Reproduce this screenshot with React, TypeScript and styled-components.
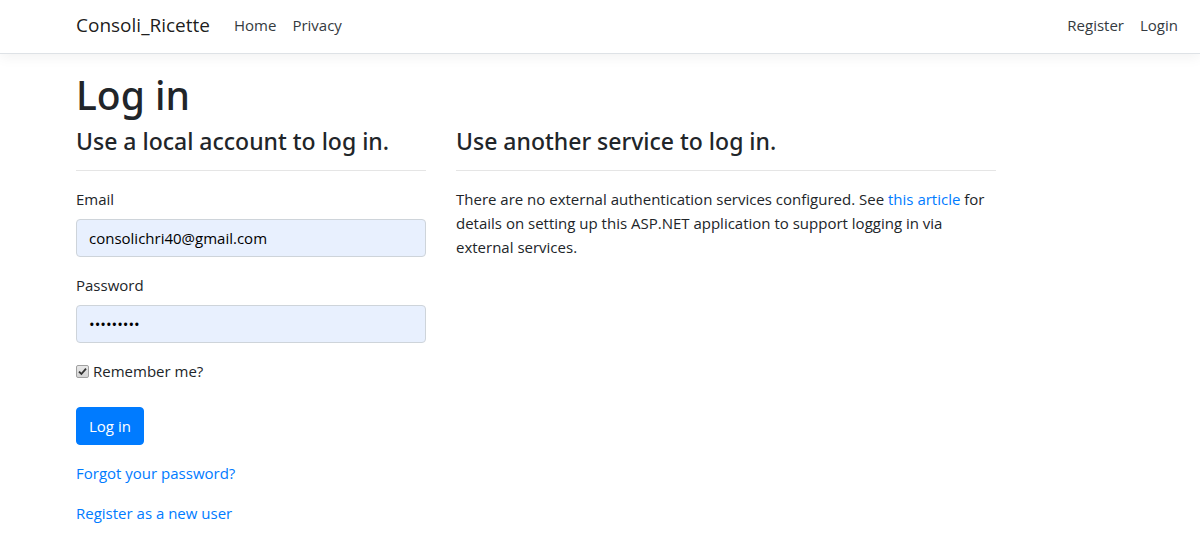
import React from "react";
import styled, { createGlobalStyle } from "styled-components";

const FONT = `"Segoe UI", "Open Sans", "Noto Sans", sans-serif`;
const HEAD = `"Segoe UI", "Noto Sans", "Open Sans", sans-serif`;

const GlobalStyle = createGlobalStyle`
  html, body { margin: 0; padding: 0; background: #fff; }
  body {
    font-family: ${FONT};
    font-size: 15px;
    line-height: 24px;
    color: #212529;
  }
  * { box-sizing: border-box; }
`;

const Navbar = styled.nav`
  background: #fff;
  border-bottom: 1px solid #dee2e6;
  box-shadow: 0 4px 12px rgba(0, 0, 0, 0.05);
  padding: 6px 0 7px;
  margin-bottom: 16px;
`;

const Container = styled.div`
  padding-left: 76px;
  width: 1186px;
  display: flex;
  align-items: center;
`;

const Brand = styled.a`
  font-size: 19px;
  line-height: 30px;
  padding: 4px 0 6px;
  margin-right: 16px;
  color: rgba(0, 0, 0, 0.9);
  text-decoration: none;
`;

const NavList = styled.div<{ $end?: boolean }>`
  display: flex;
  margin-left: ${(p) => (p.$end ? "auto" : "0")};
`;

const NavLink = styled.a`
  padding: 7px 8px 9px;
  line-height: 24px;
  color: #343a40;
  text-decoration: none;
`;

const Main = styled.main`
  padding-left: 76px;
  width: 1186px;
`;

const Title = styled.h1`
  font-family: ${HEAD};
  font-size: 39px;
  font-weight: 500;
  line-height: 47px;
  padding-top: 1px;
  margin: 0 0 9px;
`;

const Row = styled.div`
  display: flex;
  gap: 30px;
`;

const Col = styled.section<{ $w: number }>`
  width: ${(p) => p.$w}px;
`;

const Subtitle = styled.h4`
  font-family: ${HEAD};
  font-size: 23px;
  font-weight: 500;
  line-height: 25px;
  padding-top: 2px;
  margin: 0 0 8px;
`;

const Rule = styled.hr`
  margin: 16px 0;
  border: 0;
  border-top: 1px solid rgba(0, 0, 0, 0.1);
`;

const Group = styled.div`
  margin-bottom: 16px;
`;

const Label = styled.label`
  display: inline-block;
  margin-bottom: 8px;
`;

const Input = styled.input`
  display: block;
  width: 100%;
  height: 38px;
  padding: 6px 12px;
  font-family: ${FONT};
  font-size: 15px;
  line-height: 24px;
  color: #000;
  background: #e8f0fe;
  border: 1px solid #ced4da;
  border-radius: 4px;
  outline: none;
`;

const CheckLabel = styled.label`
  display: flex;
  align-items: center;
  height: 32px;
  padding-bottom: 8px;
  line-height: 24px;
`;

const CheckBox = styled.span`
  width: 13px;
  height: 13px;
  margin: 0 4px 0 0;
  border: 1px solid #a0a0a0;
  border-radius: 2px;
  background: linear-gradient(#e8e8e8, #d4d4d4);
  display: inline-flex;
  align-items: center;
  justify-content: center;
`;

const Button = styled.button`
  display: block;
  font-family: ${FONT};
  font-size: 15px;
  line-height: 24px;
  padding: 6px 12px;
  color: #fff;
  background: #007bff;
  border: 1px solid #007bff;
  border-radius: 4px;
`;

const Para = styled.p`
  margin: 0 0 16px;
`;

const Link = styled.a`
  color: #007bff;
  text-decoration: none;
`;

export default function App() {
  return (
    <>
      <GlobalStyle />
      <Navbar>
        <Container>
          <Brand href="#">Consoli_Ricette</Brand>
          <NavList>
            <NavLink href="#">Home</NavLink>
            <NavLink href="#">Privacy</NavLink>
          </NavList>
          <NavList $end>
            <NavLink href="#">Register</NavLink>
            <NavLink href="#">Login</NavLink>
          </NavList>
        </Container>
      </Navbar>
      <Main>
        <Title>Log in</Title>
        <Row>
          <Col $w={350}>
            <Subtitle>Use a local account to log in.</Subtitle>
            <Rule />
            <Group>
              <Label>Email</Label>
              <Input type="text" defaultValue="consolichri40@gmail.com" />
            </Group>
            <Group>
              <Label>Password</Label>
              <Input type="password" defaultValue="password1" />
            </Group>
            <Group>
              <CheckLabel>
                <CheckBox>
                  <svg width="9" height="9" viewBox="0 0 9 9">
                    <path d="M1 4.6 L3.4 7 L8 1.6" fill="none" stroke="#333" strokeWidth="1.8" />
                  </svg>
                </CheckBox>
                Remember me?
              </CheckLabel>
            </Group>
            <Group>
              <Button>Log in</Button>
            </Group>
            <Group>
              <Para>
                <Link href="#">Forgot your password?</Link>
              </Para>
              <Para>
                <Link href="#">Register as a new user</Link>
              </Para>
            </Group>
          </Col>
          <Col $w={540}>
            <Subtitle>Use another service to log in.</Subtitle>
            <Rule />
            <Para>
              There are no external authentication services configured. See{" "}
              <Link href="#">this article</Link> for details on setting up this ASP.NET
              application to support logging in via external services.
            </Para>
          </Col>
        </Row>
      </Main>
    </>
  );
}
